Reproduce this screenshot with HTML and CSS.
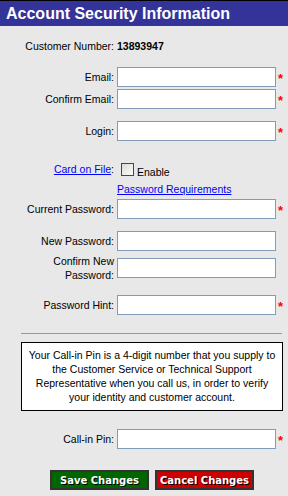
FILE: index.html
```html
<!DOCTYPE html>
<html lang="en">
<head>
    <meta charset="UTF-8">
    <meta name="viewport" content="width=device-width, initial-scale=1.0">
    <link rel="stylesheet" href="styles.css">
    <title>Account Security Information</title>
</head>
<body>
    <div class="page-header">Account Security Information</div>

    <div class="security-form">
        <div class="row customer-row">
            <div class="label">Customer Number:</div>
            <div class="value"><b>13893947</b></div>
        </div>

        <div class="row email-row">
            <label class="label" for="email">Email:</label>
            <input type="text" id="email" class="field">
            <span class="req">*</span>
        </div>
        <div class="row">
            <label class="label" for="confirmEmail">Confirm Email:</label>
            <input type="text" id="confirmEmail" class="field">
            <span class="req">*</span>
        </div>

        <div class="row spaced">
            <label class="label" for="login">Login:</label>
            <input type="text" id="login" class="field">
            <span class="req">*</span>
        </div>

        <div class="row card-row">
            <div class="label"><a href="#">Card on File</a>:</div>
            <div class="value">
                <span class="check"></span>
                <span class="enable">Enable</span>
            </div>
        </div>
        <div class="row pw-req-row">
            <div class="label"></div>
            <div class="value"><a href="#">Password Requirements</a></div>
        </div>
        <div class="row">
            <label class="label" for="currentPw">Current Password:</label>
            <input type="password" id="currentPw" class="field">
            <span class="req">*</span>
        </div>

        <div class="row spaced">
            <label class="label" for="newPw">New Password:</label>
            <input type="password" id="newPw" class="field">
        </div>
        <div class="row confirm-new-row">
            <label class="label two-line" for="confirmPw">Confirm New<br>Password:</label>
            <input type="password" id="confirmPw" class="field">
        </div>

        <div class="row hint-row">
            <label class="label" for="hint">Password Hint:</label>
            <input type="text" id="hint" class="field">
            <span class="req">*</span>
        </div>

        <div class="divider"></div>

        <div class="pin-info">
            Your Call-in Pin is a 4-digit number that you supply to<br>
            the Customer Service or Technical Support<br>
            Representative when you call us, in order to verify<br>
            your identity and customer account.
        </div>

        <div class="row pin-row">
            <label class="label" for="pin">Call-in Pin:</label>
            <input type="text" id="pin" class="field">
            <span class="req">*</span>
        </div>

        <div class="buttons">
            <button class="btn btn-save">Save Changes</button>
            <button class="btn btn-cancel">Cancel Changes</button>
        </div>
    </div>
</body>
</html>
```

FILE: styles.css
```css
body {
    margin: 0;
    padding: 0;
    background-color: #e8e8e8;
    font-family: "Liberation Sans", Arial, sans-serif;
    font-size: 10.5px;
    color: #000;
}

a {
    color: #0000ff;
    text-decoration: underline;
}

.page-header {
    height: 25px;
    border-top: 1px solid #000;
    background-color: #333399;
    color: #fff;
    font-size: 16px;
    font-weight: bold;
    line-height: 25px;
    padding-left: 6px;
}

.security-form {
    padding-top: 9px;
}

.row {
    display: flex;
    align-items: center;
    height: 22px;
}

.label {
    width: 117px;
    box-sizing: border-box;
    padding-right: 3px;
    text-align: right;
    flex-shrink: 0;
}

.value {
    display: flex;
    align-items: center;
}

.field {
    width: 159px;
    height: 20px;
    box-sizing: border-box;
    margin: 0;
    border: 1px solid #7f9db9;
    background-color: #fff;
    padding: 1px 3px;
    font-family: inherit;
    font-size: 11px;
}

.req {
    color: #ff0000;
    font-size: 13px;
    font-weight: bold;
    margin-left: 2px;
    line-height: 1;
    padding-top: 3px;
}

.email-row {
    margin-top: 9px;
}

.spaced {
    margin-top: 10px;
}

.card-row {
    margin-top: 16px;
}

.check {
    display: inline-block;
    width: 11px;
    height: 11px;
    margin-left: 4px;
    border: 1px solid #1c5180;
    background: linear-gradient(135deg, #dcdcd7, #fbfbf9);
}

.enable {
    margin-left: 3px;
    padding-top: 5px;
}

.pw-req-row {
    height: 18px;
}

.confirm-new-row {
    height: 28px;
    margin-top: 2px;
}

.two-line {
    line-height: 14px;
}

.hint-row {
    margin-top: 12px;
}

.divider {
    margin: 17px 6px 0 21px;
    border-top: 1px solid #999;
}

.pin-info {
    margin: 8px 5px 0 21px;
    padding: 5px 2px 6px;
    border: 1px solid #000;
    background-color: #fff;
    text-align: center;
    line-height: 14px;
    white-space: nowrap;
}

.pin-row {
    margin-top: 17px;
}

.buttons {
    display: flex;
    gap: 6px;
    margin-top: 20px;
    padding-left: 50px;
}

.btn {
    width: 99px;
    height: 20px;
    padding: 0;
    border: 2px solid #333;
    color: #fff;
    font-family: "DejaVu Sans", Verdana, sans-serif;
    font-size: 10px;
    font-weight: bold;
    white-space: nowrap;
    text-shadow: 1px 1px 0 #000;
    cursor: pointer;
}

.btn-save {
    background-color: #006600;
}

.btn-cancel {
    background-color: #cc0000;
}
```
